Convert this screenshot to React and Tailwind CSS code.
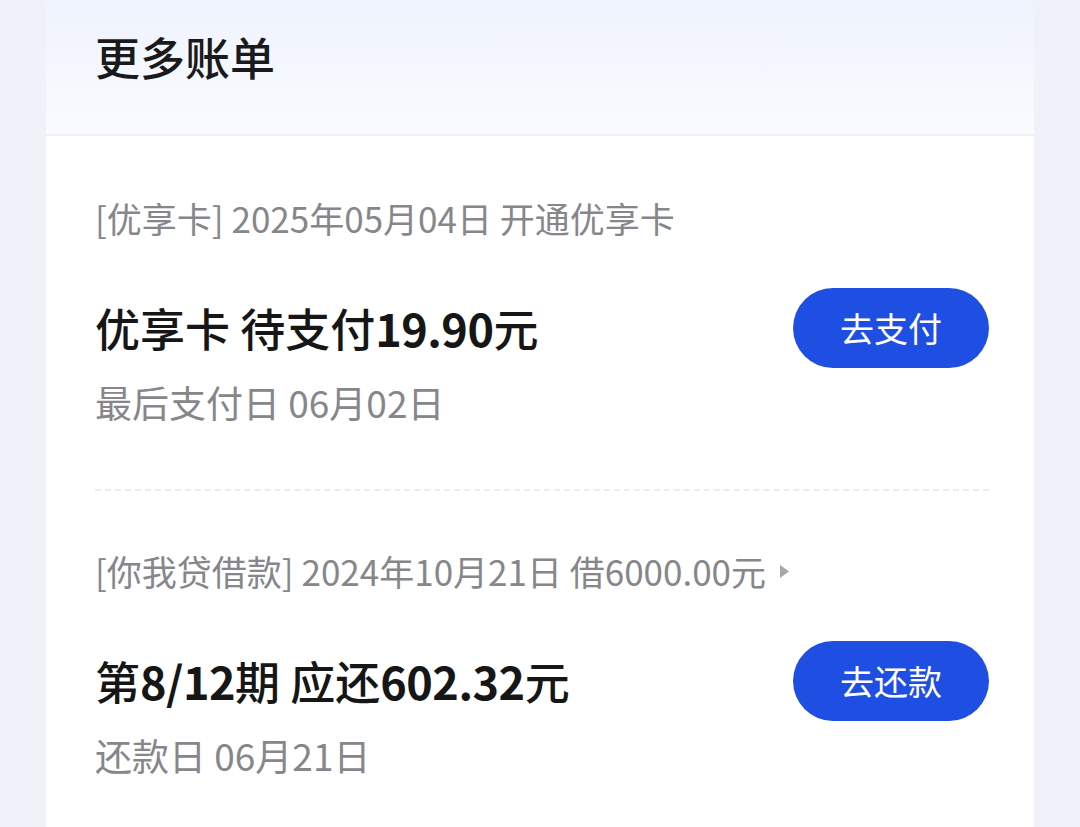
const FONT = { fontFamily: '"Noto Sans CJK SC", "Noto Sans", sans-serif' }

const bills = [
  {
    id: 'card',
    tag: '[优享卡]',
    meta: '2025年05月04日 开通优享卡',
    arrow: false,
    title: [
      { t: '优享卡 待支付', b: false },
      { t: '19.90', b: true },
      { t: '元', b: false },
    ],
    sub: '最后支付日 06月02日',
    action: '去支付',
  },
  {
    id: 'loan',
    tag: '[你我贷借款]',
    meta: '2024年10月21日 借6000.00元',
    arrow: true,
    title: [
      { t: '第', b: false },
      { t: '8/12', b: true },
      { t: '期 应还', b: false },
      { t: '602.32', b: true },
      { t: '元', b: false },
    ],
    sub: '还款日 06月21日',
    action: '去还款',
  },
]

function BillItem({ bill, first }) {
  return (
    <div className={first ? 'pt-[58px] pb-[63px]' : 'pt-[56px] pb-[63px]'}>
      <div className="flex items-center text-[35px] leading-[48px] text-[#86868b]">
        <span>{bill.tag} {bill.meta}</span>
        {bill.arrow && (
          <svg width="11" height="15" viewBox="0 0 11 15" className="ml-[13px]">
            <path d="M1 1 L10 7.5 L1 14 Z" fill="#a6a6ab" />
          </svg>
        )}
      </div>

      <div className="flex items-center justify-between mt-[46px] h-[80px]">
        <div className="text-[45px] leading-[56px] text-[#161616] font-medium">
          {bill.title.map((p, i) => (
            <span key={i} className={p.b ? 'font-bold tracking-[-0.5px]' : ''}>{p.t}</span>
          ))}
        </div>
        <button className="w-[196px] h-[80px] rounded-full bg-[#1f4fe2] text-white text-[34px] leading-none">
          {bill.action}
        </button>
      </div>

      <div className="mt-[10px] text-[37px] leading-[48px] text-[#86868b]">
        {bill.sub}
      </div>
    </div>
  )
}

export default function App() {
  return (
    <div className="min-h-[827px] bg-[#eff2f8] flex justify-center" style={FONT}>
      <div className="w-[988px] ml-[46px] mr-[46px] bg-white flex flex-col">
        <div className="h-[136px] bg-gradient-to-b from-[#eff3fd] to-[#fafbff] border-b-2 border-[#eef0f5] flex items-center pl-[49px]">
          <h1 className="text-[45px] leading-none font-medium text-[#1a1a1a] -mt-[22px]">更多账单</h1>
        </div>

        <div className="pl-[49px] pr-[45px]">
          {bills.map((bill, i) => (
            <div key={bill.id}>
              {i > 0 && <div className="border-t-2 border-dashed border-[#ececef]" />}
              <BillItem bill={bill} first={i === 0} />
            </div>
          ))}
        </div>
      </div>
    </div>
  )
}
